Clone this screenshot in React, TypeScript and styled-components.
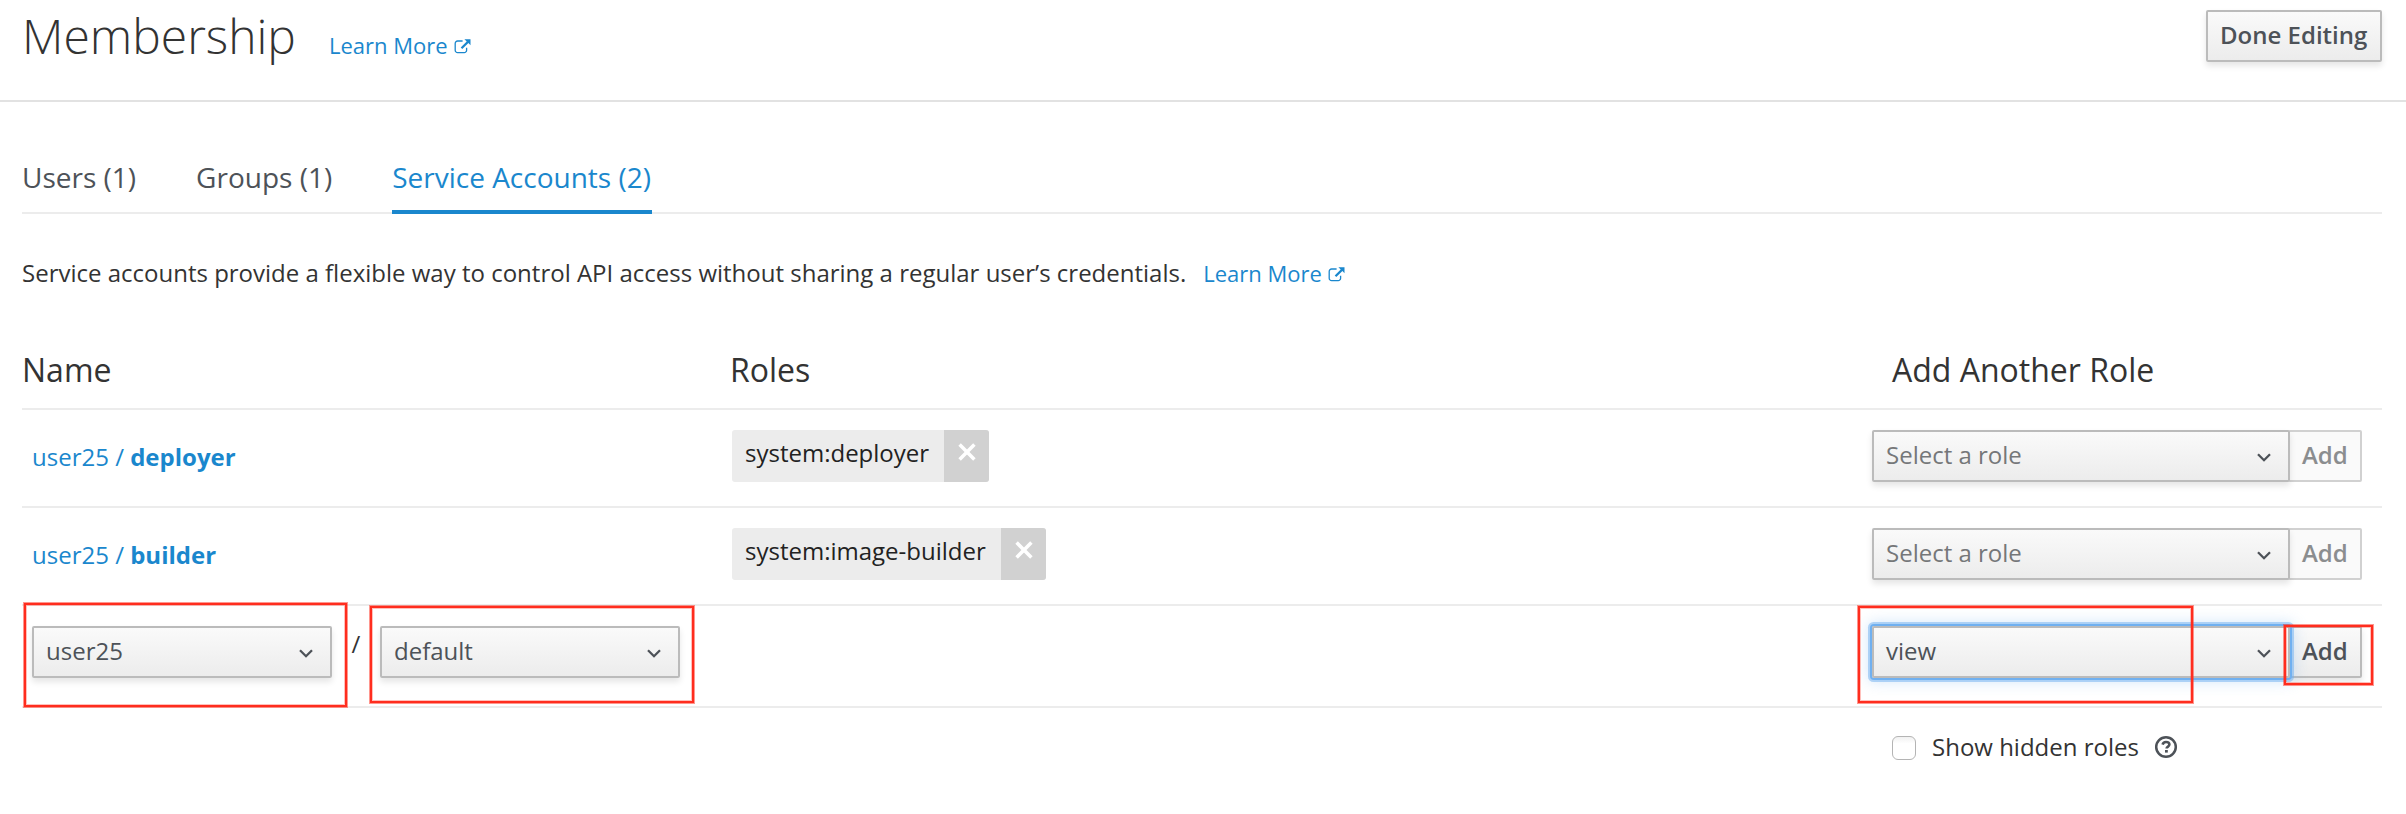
import React from 'react';
import styled, { createGlobalStyle, css } from 'styled-components';

const GlobalStyle = createGlobalStyle`
  *, *::before, *::after { box-sizing: border-box; }
  body {
    margin: 0;
    background: #fff;
    color: #333;
    font-family: "Open Sans", sans-serif;
    font-size: 24px;
  }
  button { font-family: inherit; }
`;

const Page = styled.div`
  position: relative;
  width: 2406px;
  height: 814px;
  overflow: hidden;
  background: #fff;
`;

const Header = styled.header`
  display: flex;
  justify-content: space-between;
  align-items: flex-start;
  height: 102px;
  padding: 0 24px 0 22px;
  border-bottom: 2px solid #e2e2e2;
`;

const TitleGroup = styled.div`
  display: flex;
  align-items: baseline;
  padding-top: 4px;
`;

const Title = styled.h1`
  margin: 0 33px 0 0;
  font-size: 48px;
  font-weight: 300;
  line-height: 64px;
`;

const DocLink = styled.a`
  display: inline-flex;
  align-items: baseline;
  gap: 6px;
  color: #1a87cd;
  font-size: 22px;
  white-space: nowrap;
`;

const buttonFace = css`
  height: 52px;
  border: 2px solid #bbb;
  border-radius: 2px;
  background: linear-gradient(#fafafa, #ececec);
  box-shadow: 0 4px 6px rgba(3, 3, 3, 0.1);
  color: #4d5258;
  font-size: 24px;
  line-height: 46px;
  white-space: nowrap;
`;

const Button = styled.button`
  ${buttonFace}
  padding: 0 0 2px 12px;
  font-weight: 600;
  text-align: left;
`;

const DoneButton = styled(Button)`
  width: 176px;
  margin-top: 10px;
`;

const AddButton = styled(Button)`
  width: 74px;
  margin-left: -2px;
  &:disabled {
    border-color: #d1d1d1;
    background: #fafafa;
    box-shadow: none;
    color: #8b8d8f;
  }
`;

const Content = styled.main`
  padding: 0 24px 0 22px;
`;

const Tabs = styled.nav`
  display: flex;
  gap: 60px;
  height: 112px;
  padding-top: 45px;
  border-bottom: 2px solid #ececec;
`;

const Tab = styled.a<{ $active?: boolean }>`
  height: 67px;
  font-size: 28px;
  line-height: 60px;
  white-space: nowrap;
  color: ${p => (p.$active ? '#1a87cd' : '#4d5258')};
  ${p => p.$active && css`
    width: 260px;
    border-bottom: 4px solid #1a87cd;
  `}
`;

const Description = styled.p`
  display: flex;
  align-items: baseline;
  gap: 17px;
  height: 100px;
  margin: 0;
  padding-top: 42px;
  line-height: 34px;
  white-space: nowrap;
`;

const Row = styled.div<{ $height: number }>`
  display: grid;
  grid-template-columns: 708px 1142px 1fr;
  height: ${p => p.$height}px;
  border-bottom: 2px solid #ececec;
`;

const HeadCell = styled.div<{ $indent?: number }>`
  padding: 36px 0 0 ${p => p.$indent ?? 0}px;
  font-size: 32px;
  line-height: 40px;
`;

const Cell = styled.div<{ $indent?: number }>`
  display: flex;
  align-items: flex-start;
  padding: 20px 0 0 ${p => p.$indent ?? 0}px;
`;

const AccountLink = styled.a`
  margin-top: 3px;
  color: #1a87cd;
  line-height: 48px;
  strong { font-weight: 700; }
`;

const Chip = styled.span`
  display: flex;
  height: 52px;
  border-radius: 3px;
  overflow: hidden;
  background: #ececec;
  color: #222;
`;

const ChipLabel = styled.span`
  padding: 0 15px 0 13px;
  line-height: 45px;
`;

const ChipClose = styled.span`
  width: 45px;
  padding: 13px 0 0 14px;
  background: #d1d1d1;
  svg { display: block; }
`;

const SelectBox = styled.div<{ $width: number; $focused?: boolean; $empty?: boolean }>`
  ${buttonFace}
  position: relative;
  z-index: 1;
  display: flex;
  justify-content: space-between;
  width: ${p => p.$width}px;
  padding: 0 17px 0 12px;
  color: ${p => (p.$empty ? '#757779' : '#4d5258')};
  svg { display: block; margin-top: 21px; }
  ${p => p.$focused && css`
    box-shadow: 0 0 0 2px #70b0f0, 0 0 0 4px rgba(112, 176, 240, 0.5),
      0 0 14px 4px rgba(112, 176, 240, 0.3);
  `}
`;

const Slash = styled.span`
  width: 48px;
  line-height: 36px;
  text-align: center;
`;

const Footer = styled.label`
  display: flex;
  align-items: flex-start;
  padding: 27px 0 0 1870px;
`;

const FooterText = styled.span`
  line-height: 24px;
`;

const Checkbox = styled.span`
  width: 24px;
  height: 24px;
  margin: 1px 16px 0 0;
  border: 1.5px solid #b4b4b4;
  border-radius: 6px;
  background: linear-gradient(#f1f1f1, #fff 30%);
`;

const HelpIcon = styled.svg`
  margin-left: 15px;
`;

const Callout = styled.div<{ $x: number; $y: number; $w: number; $h: number }>`
  position: absolute;
  z-index: 2;
  left: ${p => p.$x}px;
  top: ${p => p.$y}px;
  width: ${p => p.$w}px;
  height: ${p => p.$h}px;
  border: 2px solid #ff2d1e;
  box-shadow: 0 0 0 1px rgba(255, 45, 30, 0.5), inset 0 0 0 1px rgba(255, 45, 30, 0.3);
`;

const ExternalIcon = () => (
  <svg width="17" height="15" viewBox="0 0 17 15" fill="none">
    <path
      d="M8.6 2H3.6a2.4 2.4 0 0 0-2.4 2.4v6.8a2.4 2.4 0 0 0 2.4 2.4h6.6a2.4 2.4 0 0 0 2.4-2.4V8.8"
      stroke="currentColor"
      strokeWidth="1.3"
    />
    <path d="M10.4 0.3h6.1v5.9l-2.1-2.1-6.1 5.9-1.6-1.6 6-5.9z" fill="currentColor" />
  </svg>
);

const Chevron = () => (
  <svg width="14" height="10" viewBox="0 0 14 10" fill="none">
    <path d="M1 1.2L7 7.2l6-6" stroke="#4d5258" strokeWidth="2.3" />
  </svg>
);

const Cross = () => (
  <svg width="18" height="18" viewBox="0 0 18 18">
    <path d="M1.6 1.6l14.8 14.8M16.4 1.6L1.6 16.4" stroke="#fff" strokeWidth="3.5" />
  </svg>
);

const LearnMore = () => (
  <DocLink>
    Learn More
    <ExternalIcon />
  </DocLink>
);

type SelectProps = { width: number; value?: string; placeholder?: string; focused?: boolean };

const Select = ({ width, value, placeholder, focused }: SelectProps) => (
  <SelectBox $width={width} $focused={focused} $empty={!value}>
    <span>{value ?? placeholder}</span>
    <Chevron />
  </SelectBox>
);

const accounts = [
  { project: 'user25', name: 'deployer', role: 'system:deployer' },
  { project: 'user25', name: 'builder', role: 'system:image-builder' },
];

export default function App() {
  return (
    <>
      <GlobalStyle />
      <Page>
        <Header>
          <TitleGroup>
            <Title>Membership</Title>
            <LearnMore />
          </TitleGroup>
          <DoneButton>Done Editing</DoneButton>
        </Header>
        <Content>
          <Tabs>
            <Tab>Users (1)</Tab>
            <Tab>Groups (1)</Tab>
            <Tab $active>Service Accounts (2)</Tab>
          </Tabs>
          <Description>
            <span>
              Service accounts provide a flexible way to control API access without sharing a regular
              user’s credentials.
            </span>
            <LearnMore />
          </Description>
          <Row $height={96}>
            <HeadCell>Name</HeadCell>
            <HeadCell>Roles</HeadCell>
            <HeadCell $indent={20}>Add Another Role</HeadCell>
          </Row>
          {accounts.map(a => (
            <Row key={a.name} $height={98}>
              <Cell $indent={10}>
                <AccountLink>
                  {a.project} / <strong>{a.name}</strong>
                </AccountLink>
              </Cell>
              <Cell $indent={2}>
                <Chip>
                  <ChipLabel>{a.role}</ChipLabel>
                  <ChipClose>
                    <Cross />
                  </ChipClose>
                </Chip>
              </Cell>
              <Cell>
                <Select width={418} placeholder="Select a role" />
                <AddButton disabled>Add</AddButton>
              </Cell>
            </Row>
          ))}
          <Row $height={102}>
            <Cell $indent={10}>
              <Select width={300} value="user25" />
              <Slash>/</Slash>
              <Select width={300} value="default" />
            </Cell>
            <Cell />
            <Cell>
              <Select width={418} value="view" focused />
              <AddButton>Add</AddButton>
            </Cell>
          </Row>
          <Footer>
            <Checkbox />
            <FooterText>Show hidden roles</FooterText>
            <HelpIcon width="24" height="24" viewBox="0 0 24 24" fill="none">
              <circle cx="12" cy="12" r="9.8" stroke="#4d5258" strokeWidth="2.5" />
              <path
                d="M8.6 9.6C9 7.8 10.2 7 12 7c2 0 3.4 1 3.4 2.6 0 2-2.8 2-2.8 4"
                stroke="#4d5258"
                strokeWidth="2.6"
              />
              <rect x="11" y="15" width="2.8" height="2.6" fill="#4d5258" />
            </HelpIcon>
          </Footer>
        </Content>
        <Callout $x={24} $y={603} $w={323} $h={104} />
        <Callout $x={370} $y={606} $w={324} $h={97} />
        <Callout $x={1858} $y={606} $w={335} $h={97} />
        <Callout $x={2284} $y={625} $w={89} $h={60} />
      </Page>
    </>
  );
}
